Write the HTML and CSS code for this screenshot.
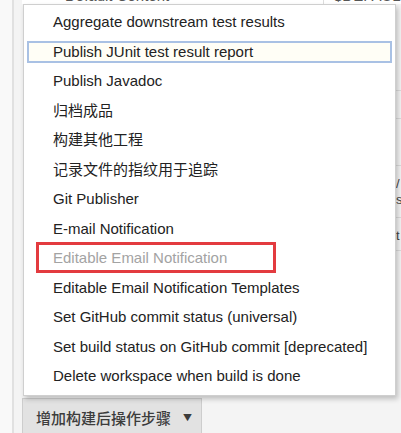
FILE: index.html
```html
<!DOCTYPE html>
<html lang="zh-CN">
<head>
    <meta charset="UTF-8">
    <title>增加构建后操作步骤</title>
    <link rel="stylesheet" href="styles.css">
</head>
<body>
    <div class="layout">
        <div class="rail"></div>
        <div class="main">
            <!-- 被菜单挡住的表单行 -->
            <div class="top-peek">
                <span class="peek-label">Default Content</span>
                <span class="peek-value">$DEFAULT_CONTENT</span>
            </div>

            <div class="stage">
                <ul class="menu">
                    <li class="item">Aggregate downstream test results</li>
                    <li class="item focused">Publish JUnit test result report</li>
                    <li class="item">Publish Javadoc</li>
                    <li class="item">归档成品</li>
                    <li class="item">构建其他工程</li>
                    <li class="item">记录文件的指纹用于追踪</li>
                    <li class="item">Git Publisher</li>
                    <li class="item">E-mail Notification</li>
                    <li class="item disabled marked">Editable Email Notification</li>
                    <li class="item">Editable Email Notification Templates</li>
                    <li class="item">Set GitHub commit status (universal)</li>
                    <li class="item">Set build status on GitHub commit [deprecated]</li>
                    <li class="item">Delete workspace when build is done</li>
                </ul>
                <div class="side-peek">
                    <div class="peek-row r1"></div>
                    <div class="peek-row r2"></div>
                    <div class="peek-row r3">/<br>s</div>
                    <div class="peek-row r4">t</div>
                </div>
            </div>

            <div class="actions">
                <button class="add-step"><span class="label">增加构建后操作步骤</span><span class="caret">▼</span></button>
            </div>
        </div>
    </div>
</body>
</html>
```

FILE: styles.css
```css
body {
    margin: 0;
    font-family: "Liberation Sans", Arial, "Noto Sans CJK SC", sans-serif;
    font-size: 15px;
    color: #222;
    background-color: #f9f9f9;
}

.layout {
    display: flex;
    height: 433px;
    overflow: hidden;
}

.rail {
    width: 12px;
    flex: none;
    background-color: #f9f9f9;
    border-right: 2px solid #e1e1e1;
}

.main {
    flex: 1;
    min-width: 0;
    background-color: #f4f4f4;
    padding-left: 8px;
}

/* 菜单上方露出的一点点表单 */
.top-peek {
    height: 4px;
    overflow: hidden;
    display: flex;
    background-color: #fff;
    color: #555;
}

.peek-label {
    margin-left: 43px;
    margin-top: -13px;
    width: 258px;
}

.peek-value {
    margin-top: -13px;
    padding-left: 10px;
    border-left: 1px solid #ddd;
    flex: 1;
    white-space: nowrap;
    overflow: hidden;
}

.stage {
    display: flex;
}

.menu {
    list-style: none;
    margin: 0 0 0 1px;
    padding: 6px 3px 8px;
    width: 365px;
    flex: none;
    background-color: #fff;
    border: 1px solid #cfcfcf;
    box-shadow: 2px 3px 5px rgba(0, 0, 0, 0.22);
    position: relative;
    z-index: 1;
}

.item {
    box-sizing: border-box;
    height: 22px;
    line-height: 18px;
    margin-bottom: 7.5px;
    padding-left: 24px;
    border: 2px solid transparent;
    white-space: nowrap;
    position: relative;
}

.item:last-child {
    margin-bottom: 0;
}

.item.focused {
    border-color: #a9c1e4;
    background-color: #fffef6;
}

.item.disabled {
    color: #a3a3a3;
}

/* 截图上的红框标注 */
.item.marked::after {
    content: "";
    position: absolute;
    left: 7px;
    top: -7px;
    width: 234px;
    height: 25px;
    border: 3px solid #e33b3f;
}

.side-peek {
    flex: 1;
    padding-top: 86px;
    color: #444;
    font-size: 13px;
    line-height: 16px;
}

.peek-row {
    border-top: 1px solid #dcdcdc;
}

.r1 {
    height: 27px;
}

.r2 {
    height: 46px;
}

.r3 {
    height: 52px;
    padding-top: 10px;
    box-sizing: border-box;
}

.r4 {
    height: 34px;
    padding-top: 10px;
    box-sizing: border-box;
    border-bottom: 1px solid #dcdcdc;
}

.actions {
    padding-top: 2px;
}

.add-step {
    display: flex;
    align-items: center;
    font-family: "Noto Sans CJK SC", sans-serif;
    font-size: 15px;
    font-weight: 500;
    color: #3c3c3c;
    background-color: #e2e2e2;
    border: 1px solid #cdcdcd;
    padding: 0 0 0 13px;
    height: 38px;
    width: 180px;
    white-space: nowrap;
    cursor: pointer;
}

.caret {
    font-size: 9px;
    margin-left: 12px;
}
```
